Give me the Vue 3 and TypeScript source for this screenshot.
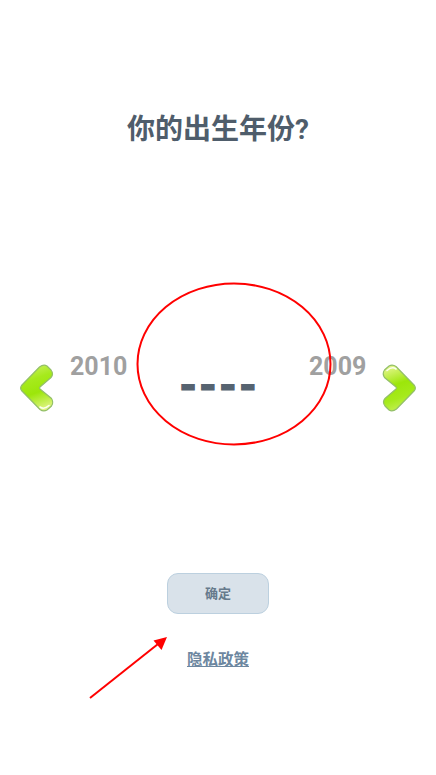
<script setup lang="ts">
const years = { prev: '2010', next: '2009' }
const chevronPath =
  'M1.5 21.5 L19.5 3 Q23.5 0 27 2 L31 6 Q34 10 31 13.5 L20 23 Q19 24 20 25 L31.5 34.5 Q34 38.5 31.5 42 L27 46 Q23.5 48 20 45.5 L1.5 26.5 Q-0.2 24 1.5 21.5 Z'
</script>

<template>
  <main class="page">
    <h1 class="title">你的出生年份?</h1>

    <section class="picker">
      <button class="nav" type="button" aria-label="previous">
        <svg class="chev" width="34" height="48" viewBox="0 0 34 48">
          <defs>
            <linearGradient id="lime" x1="0.35" y1="0" x2="0.6" y2="1">
              <stop offset="0" stop-color="#c8f05c" />
              <stop offset="0.3" stop-color="#a6ea1c" />
              <stop offset="0.6" stop-color="#9ce60a" />
              <stop offset="1" stop-color="#e0f584" />
            </linearGradient>
          </defs>
          <path :d="chevronPath" fill="url(#lime)" stroke="#93bf68" stroke-width="1.2" />
          <path d="M20 43 Q24 46 29 41.5" fill="none" stroke="#fbfff0" stroke-width="1.6" stroke-linecap="round" />
        </svg>
      </button>

      <span class="year">{{ years.prev }}</span>
      <span class="current">----</span>
      <span class="year">{{ years.next }}</span>

      <button class="nav flip" type="button" aria-label="next">
        <svg class="chev" width="34" height="48" viewBox="0 0 34 48">
          <path :d="chevronPath" fill="url(#lime)" stroke="#93bf68" stroke-width="1.2" />
          <path d="M20 43 Q24 46 29 41.5" fill="none" stroke="#fbfff0" stroke-width="1.6" stroke-linecap="round" />
        </svg>
      </button>
    </section>

    <button class="confirm" type="button">确定</button>
    <a class="privacy" href="#">隐私政策</a>

    <svg class="marks" width="436" height="775" viewBox="0 0 436 775">
      <ellipse cx="234" cy="364" rx="96.5" ry="80.5" fill="none" stroke="#ff0000" stroke-width="2" />
      <line x1="90" y1="698" x2="158" y2="644" stroke="#ff0000" stroke-width="2" />
      <polygon points="167,637 153.5,640.5 161.5,650" fill="#ff0000" />
    </svg>
  </main>
</template>

<style>
html, body { margin: 0; background: #ffffff; }
</style>

<style scoped>
.page {
  position: relative;
  width: 436px;
  height: 775px;
  overflow: hidden;
  background: #ffffff;
  display: flex;
  flex-direction: column;
  align-items: center;
  font-family: Roboto, "Noto Sans CJK SC", sans-serif;
}
.title {
  margin: 112px 0 0;
  font-size: 28px;
  line-height: 36px;
  font-weight: 700;
  color: #4f5d6b;
}
.picker {
  box-sizing: border-box;
  width: 100%;
  margin-top: 204px;
  padding: 0 20px;
  height: 60px;
  display: flex;
  align-items: flex-end;
}
.nav {
  width: 34px;
  height: 48px;
  padding: 0;
  border: 0;
  background: none;
  flex: none;
}
.chev { display: block; overflow: visible; }
.flip { transform: rotate(180deg); }
.year {
  align-self: flex-start;
  width: 57px;
  margin-left: 16px;
  font-size: 25px;
  line-height: 30px;
  font-weight: 700;
  color: #a0a0a0;
}
.year + .current + .year { margin-left: 0; margin-right: 16px; }
.current {
  flex: 1;
  box-sizing: border-box;
  padding-left: 1px;
  text-align: center;
  font-size: 42px;
  line-height: 46px;
  margin-bottom: 3px;
  font-weight: 900;
  letter-spacing: 1px;
  -webkit-text-stroke: 1.2px #566370;
  color: #566370;
}
.confirm {
  margin-top: 161px;
  box-sizing: border-box;
  width: 102px;
  height: 41px;
  border: 1px solid #bcd0df;
  border-radius: 11px;
  background: #d9e2ea;
  font: 700 13px/1 Roboto, "Noto Sans CJK SC", sans-serif;
  color: #667a8c;
}
.privacy {
  margin-top: 35px;
  font-size: 15.5px;
  line-height: 22px;
  font-weight: 700;
  color: #6d87a0;
  text-decoration: underline;
}
.marks {
  position: absolute;
  inset: 0;
  pointer-events: none;
}
</style>
